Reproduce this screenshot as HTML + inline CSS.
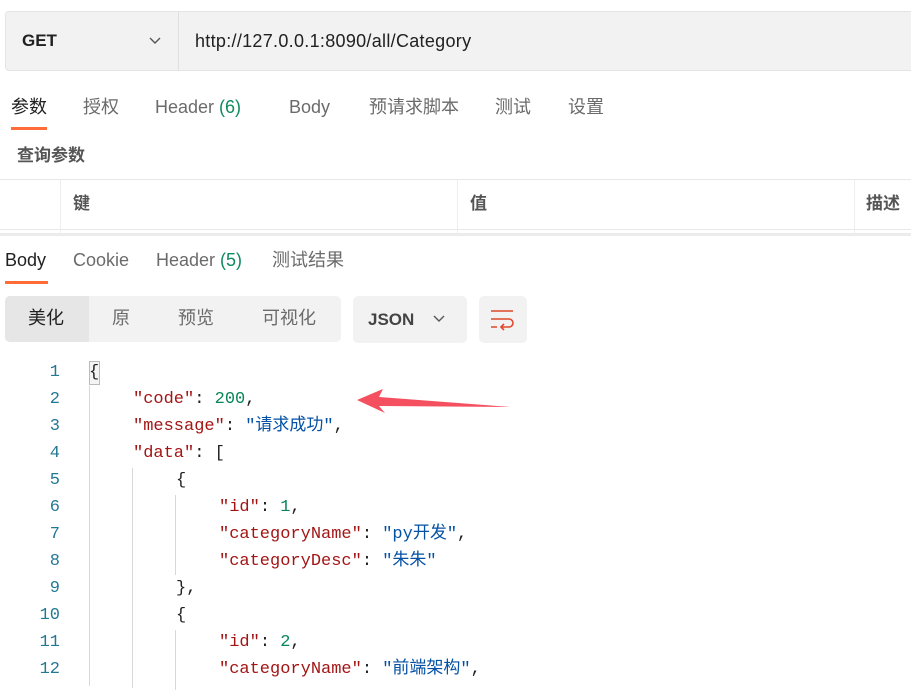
<!DOCTYPE html>
<html><head><meta charset="utf-8"><style>
*{margin:0;padding:0;box-sizing:border-box}
body{width:911px;height:681px;overflow:hidden;background:#fff;font-family:"Liberation Sans","Noto Sans CJK SC",sans-serif;position:relative;color:#212121}
.abs{position:absolute;line-height:22px;white-space:nowrap}
.bar{left:5px;top:11px;width:920px;height:60px;background:#f2f2f2;border:1px solid #e4e4e4;border-radius:4px}
.tab{position:absolute;font-size:18px;line-height:22px;color:#6b6b6b;white-space:nowrap}
.code{font-family:"Liberation Mono","Noto Sans CJK SC",monospace;font-size:17px}
.ln{position:absolute;width:60px;text-align:right;color:#237893;font-family:"Liberation Mono",monospace;font-size:17px;line-height:22px}
.cl{position:absolute;white-space:pre;line-height:22px}
.k{color:#a31515}.n{color:#098658}.s{color:#0451a5}
.guide{position:absolute;width:1px;background:#d8d8d8}
</style></head><body>
<div class="abs bar"></div>
<div class="abs" style="left:178px;top:12px;width:1px;height:58px;background:#e0e0e0"></div>
<div class="abs" style="left:22px;top:30px;font-size:17px;font-weight:bold;color:#212121">GET</div>
<svg class="abs" style="left:148px;top:36px" width="14" height="10"><path d="M2 2l5 5 5-5" fill="none" stroke="#555" stroke-width="1.4"/></svg>
<div class="abs" style="left:195px;top:30px;font-size:18px;letter-spacing:0.3px;color:#212121">http://127.0.0.1:8090/all/Category</div>

<div class="tab" style="left:11px;top:96px;color:#212121">参数</div>
<div class="abs" style="left:11px;top:127px;width:36px;height:3px;background:#ff6c37"></div>
<div class="tab" style="left:83px;top:96px">授权</div>
<div class="tab" style="left:155px;top:96px">Header <span style="color:#0f8a5f">(6)</span></div>
<div class="tab" style="left:289px;top:96px">Body</div>
<div class="tab" style="left:369px;top:96px">预请求脚本</div>
<div class="tab" style="left:495px;top:96px">测试</div>
<div class="tab" style="left:568px;top:96px">设置</div>
<div class="abs" style="left:17px;top:145px;font-size:17px;font-weight:bold;color:#555">查询参数</div>
<div class="abs" style="left:0;top:179px;width:911px;height:1px;background:#e8e8e8"></div>
<div class="abs" style="left:0;top:229px;width:911px;height:1px;background:#e8e8e8"></div>
<div class="abs" style="left:60px;top:180px;width:1px;height:55px;background:#eee"></div>
<div class="abs" style="left:457px;top:180px;width:1px;height:55px;background:#eee"></div>
<div class="abs" style="left:854px;top:180px;width:1px;height:55px;background:#eee"></div>
<div class="abs" style="left:73px;top:193px;font-size:17px;font-weight:bold;color:#555">键</div>
<div class="abs" style="left:470px;top:193px;font-size:17px;font-weight:bold;color:#555">值</div>
<div class="abs" style="left:866px;top:193px;font-size:17px;font-weight:bold;color:#555">描述</div>
<div class="abs" style="left:0;top:233px;width:911px;height:3px;background:#ececec"></div>

<div class="tab" style="left:5px;top:249px;color:#212121">Body</div>
<div class="abs" style="left:5px;top:281px;width:43px;height:3px;background:#ff6c37"></div>
<div class="tab" style="left:73px;top:249px">Cookie</div>
<div class="tab" style="left:156px;top:249px">Header <span style="color:#0f8a5f">(5)</span></div>
<div class="tab" style="left:272px;top:249px">测试结果</div>

<div class="abs" style="left:5px;top:296px;width:336px;height:46px;background:#f2f2f2;border-radius:5px"></div>
<div class="abs" style="left:5px;top:296px;width:84px;height:46px;background:#e6e6e6;border-radius:5px 0 0 5px"></div>
<div class="tab" style="left:28px;top:307px;color:#212121">美化</div>
<div class="tab" style="left:112px;top:307px">原</div>
<div class="tab" style="left:178px;top:307px">预览</div>
<div class="tab" style="left:262px;top:307px">可视化</div>
<div class="abs" style="left:353px;top:296px;width:114px;height:47px;background:#f2f2f2;border-radius:5px"></div>
<div class="abs" style="left:368px;top:309px;font-size:17px;font-weight:bold;color:#444">JSON</div>
<svg class="abs" style="left:432px;top:314px" width="14" height="10"><path d="M2 2l5 5 5-5" fill="none" stroke="#555" stroke-width="1.4"/></svg>
<div class="abs" style="left:479px;top:296px;width:48px;height:47px;background:#f2f2f2;border-radius:5px"></div>
<svg class="abs" style="left:490px;top:308px" width="26" height="24"><path d="M1 3h22M1 11h18a4 4 0 0 1 0 8h-8M14 16l-3 3 3 3M1 19h6" fill="none" stroke="#e0492b" stroke-width="1.6"/></svg>

<div class="abs" style="left:89px;top:361px;width:11px;height:24px;border:1px solid #bbb;background:#f4f4f4"></div>
<div class="guide" style="left:89px;top:386px;height:300px"></div>
<div class="guide" style="left:132px;top:468px;height:220px"></div>
<div class="guide" style="left:175px;top:495px;height:80px"></div>
<div class="guide" style="left:175px;top:630px;height:60px"></div>

<div class="code">
<div class="ln" style="left:0;top:362px">1</div><div class="cl" style="left:89px;top:362px">{</div>
<div class="ln" style="left:0;top:389px">2</div><div class="cl" style="left:133px;top:389px"><span class="k">"code"</span>: <span class="n">200</span>,</div>
<div class="ln" style="left:0;top:416px">3</div><div class="cl" style="left:133px;top:416px"><span class="k">"message"</span>: <span class="s">"请求成功"</span>,</div>
<div class="ln" style="left:0;top:443px">4</div><div class="cl" style="left:133px;top:443px"><span class="k">"data"</span>: [</div>
<div class="ln" style="left:0;top:470px">5</div><div class="cl" style="left:176px;top:470px">{</div>
<div class="ln" style="left:0;top:497px">6</div><div class="cl" style="left:219px;top:497px"><span class="k">"id"</span>: <span class="n">1</span>,</div>
<div class="ln" style="left:0;top:524px">7</div><div class="cl" style="left:219px;top:524px"><span class="k">"categoryName"</span>: <span class="s">"py开发"</span>,</div>
<div class="ln" style="left:0;top:551px">8</div><div class="cl" style="left:219px;top:551px"><span class="k">"categoryDesc"</span>: <span class="s">"朱朱"</span></div>
<div class="ln" style="left:0;top:578px">9</div><div class="cl" style="left:176px;top:578px">},</div>
<div class="ln" style="left:0;top:605px">10</div><div class="cl" style="left:176px;top:605px">{</div>
<div class="ln" style="left:0;top:632px">11</div><div class="cl" style="left:219px;top:632px"><span class="k">"id"</span>: <span class="n">2</span>,</div>
<div class="ln" style="left:0;top:659px">12</div><div class="cl" style="left:219px;top:659px"><span class="k">"categoryName"</span>: <span class="s">"前端架构"</span>,</div>
</div>

<svg class="abs" style="left:355px;top:386px" width="160" height="30"><path d="M2 14L28 3L24 11L155 21L24 20L30 27Z" fill="#f4505f"/></svg>
</body></html>
